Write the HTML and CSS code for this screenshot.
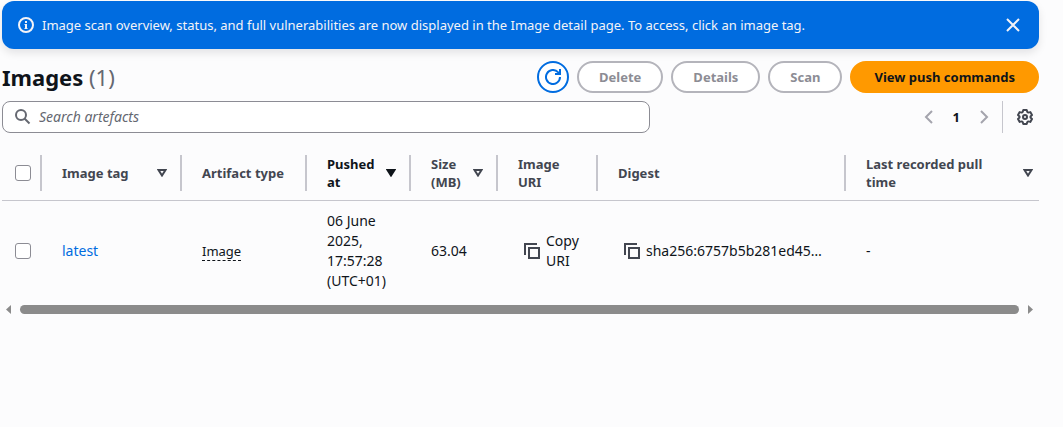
FILE: index.html
```html
<!DOCTYPE html>
<html lang="en">
<head>
<meta charset="utf-8">
<title>Images</title>
<link rel="stylesheet" href="styles.css">
</head>
<body>
<main class="page">
  <div class="banner" role="status">
    <svg class="icon" viewBox="0 0 16 16" aria-hidden="true"><circle cx="8" cy="8" r="7"/><path d="M8 7v5M8 4v2"/><path stroke-width="1" d="M6.500 7.500H8M6.500 11.500h3"/></svg>
    <p class="banner-text">Image scan overview, status, and full vulnerabilities are now displayed in the Image detail page. To access, click an image tag.</p>
    <button class="icon-button" type="button" aria-label="Dismiss"><svg class="icon" viewBox="0 0 16 16"><path d="m2 2 12 12M14 2 2 14"/></svg></button>
  </div>

  <header class="header">
    <h1 class="title">Images <span class="count">(1)</span></h1>
    <div class="actions">
      <button class="button refresh" type="button" aria-label="Refresh"><svg class="icon" viewBox="0 0 16 16"><path d="M15 8a7 7 0 1 1-2-4.900L15 5M10 5h5V0"/></svg></button>
      <button class="button" type="button" disabled>Delete</button>
      <button class="button" type="button" disabled>Details</button>
      <button class="button" type="button" disabled>Scan</button>
      <button class="button primary" type="button">View push commands</button>
    </div>
  </header>

  <div class="tools">
    <div class="search">
      <svg class="icon" viewBox="0 0 16 16" aria-hidden="true"><circle cx="6" cy="6" r="5"/><path d="m9.500 9.500 5 5"/></svg>
      <input class="search-input" type="search" placeholder="Search artefacts" aria-label="Search artefacts">
    </div>
    <nav class="pagination" aria-label="Pagination">
      <button class="icon-button" type="button" aria-label="Previous page" disabled><svg class="icon" viewBox="0 0 16 16"><path d="m11 2-6 6 6 6"/></svg></button>
      <button class="icon-button current" type="button" aria-current="page">1</button>
      <button class="icon-button" type="button" aria-label="Next page" disabled><svg class="icon" viewBox="0 0 16 16"><path d="m5 2 6 6-6 6"/></svg></button>
    </nav>
    <div class="preferences">
      <button class="icon-button" type="button" aria-label="Preferences"><svg class="icon" viewBox="0 0 16 16"><path stroke-linejoin="round" d="M6.300 1h3.400l.6 2 1 .6 2-.5L15 6l-1.500 1.400v1.200L15 10l-1.700 2.900-2-.5-1 .6-.6 2H6.300l-.6-2-1-.6-2 .5L1 10l1.500-1.400V7.400L1 6l1.700-2.900 2 .5 1-.6z"/><circle cx="8" cy="8" r="2"/></svg></button>
    </div>
  </div>

  <table class="table">
    <colgroup><col class="c-select"><col class="c-tag"><col class="c-type"><col class="c-pushed"><col class="c-size"><col class="c-uri"><col class="c-digest"><col></colgroup>
    <thead>
      <tr>
        <th class="select"><div class="head"><input class="check" type="checkbox" aria-label="Select all images"></div></th>
        <th><div class="head">Image tag<svg class="sort" viewBox="0 0 10 8"><path d="M1.500 1h7L5 6.500z"/></svg></div></th>
        <th><div class="head">Artifact type</div></th>
        <th class="sorted"><div class="head">Pushed at<svg class="sort" viewBox="0 0 10 8"><path d="M1.500 1h7L5 6.500z"/></svg></div></th>
        <th><div class="head">Size (MB)<svg class="sort" viewBox="0 0 10 8"><path d="M1.500 1h7L5 6.500z"/></svg></div></th>
        <th><div class="head">Image<br>URI</div></th>
        <th><div class="head">Digest</div></th>
        <th><div class="head">Last recorded pull time<svg class="sort" viewBox="0 0 10 8"><path d="M1.500 1h7L5 6.500z"/></svg></div></th>
      </tr>
    </thead>
    <tbody>
      <tr>
        <td class="select"><input class="check" type="checkbox" aria-label="Select latest"></td>
        <td><a class="link" href="#latest">latest</a></td>
        <td><span class="hint">Image</span></td>
        <td>06 June 2025, 17:57:28 (UTC+01)</td>
        <td>63.04</td>
        <td><div class="copy"><button class="icon-button" type="button" aria-label="Copy URI"><svg class="icon" viewBox="0 0 16 16"><path d="M13 1H1v11M5 5h10v10H5z"/></svg></button><span>Copy URI</span></div></td>
        <td><div class="copy"><button class="icon-button" type="button" aria-label="Copy digest"><svg class="icon" viewBox="0 0 16 16"><path d="M13 1H1v11M5 5h10v10H5z"/></svg></button><span class="digest">sha256:6757b5b281ed45…</span></div></td>
        <td>-</td>
      </tr>
    </tbody>
  </table>

  <div class="scrollbar" aria-hidden="true">
    <svg class="arrow" viewBox="0 0 5 9"><path d="M5 0v9L0 4.500z"/></svg>
    <div class="thumb"></div>
    <svg class="arrow" viewBox="0 0 5 9"><path d="M0 0v9l5-4.500z"/></svg>
  </div>
</main>
</body>
</html>
```
FILE: styles.css
```css
* { box-sizing: border-box; }
body {
  margin: 0;
  background: #fcfcfd;
  color: #0f141a;
  font: 14px/20px "Noto Sans", "Open Sans", sans-serif;
}
button, input { font: inherit; color: inherit; }
.page { padding: 1px 24px 0 2px; }
.icon {
  display: block;
  flex: none;
  width: 16px;
  height: 16px;
  fill: none;
  stroke: currentColor;
  stroke-width: 2;
}
.icon-button {
  display: block;
  padding: 0;
  border: 0;
  background: none;
}

.banner {
  display: flex;
  align-items: center;
  gap: 8px;
  min-height: 48px;
  padding: 8px 18px 8px 16px;
  border-radius: 12px;
  background: #006ce0;
  color: #f3f3f7;
  font-size: 13px;
  box-shadow: 0 4px 8px rgba(0, 7, 22, 0.1);
}
.banner-text { flex: 1; margin: 0; }

.header {
  display: flex;
  align-items: center;
  justify-content: space-between;
  margin-top: 12px;
}
.title { margin: 0; font-size: 22px; line-height: 32px; }
.count { color: #656871; font-weight: 400; }
.actions { display: flex; gap: 8px; }
.button {
  height: 32px;
  padding: 0 20px;
  border: 2px solid #b4b4bb;
  border-radius: 16px;
  background: #fff;
  color: #8c8c94;
  font-size: 13px;
  font-weight: 700;
}
.button.refresh {
  width: 32px;
  padding: 0 6px;
  border-color: #006ce0;
  color: #006ce0;
}
.button.primary {
  padding: 0 22px;
  border-color: #ff9900;
  background: #ff9900;
  color: #0f141a;
}

.tools { display: flex; align-items: center; margin-top: 8px; }
.search {
  display: flex;
  align-items: center;
  gap: 8px;
  width: 648px;
  height: 32px;
  padding: 0 12px;
  border: 1px solid #8c8c94;
  border-radius: 8px;
  background: #fff;
  color: #656871;
}
.search-input {
  flex: 1;
  min-width: 0;
  padding: 0;
  border: 0;
  outline: 0;
  background: none;
}
.search-input::placeholder { color: #656871; font-style: italic; opacity: 1; }
.pagination {
  display: flex;
  align-items: center;
  gap: 16px;
  margin-left: auto;
  color: #a4a4ad;
}
.current { color: #0f141a; font-size: 13px; font-weight: 700; }
.preferences {
  display: flex;
  align-items: center;
  height: 32px;
  margin-left: 10px;
  padding: 0 6px 0 14px;
  border-left: 1px solid #c6c6cd;
  color: #424650;
}

.table {
  width: 100%;
  margin-top: 12px;
  border-collapse: separate;
  border-spacing: 0;
  table-layout: fixed;
}
.c-select { width: 40px; }
.c-tag { width: 140px; }
.c-type { width: 125px; }
.c-pushed { width: 104px; }
.c-size { width: 87px; }
.c-uri { width: 100px; }
.c-digest { width: 248px; }
.table th {
  padding: 10px 0 9px;
  border-bottom: 1px solid #c6c6cd;
  color: #424650;
  font-size: 13px;
  line-height: 18px;
  text-align: left;
}
.head {
  display: flex;
  align-items: center;
  justify-content: space-between;
  gap: 8px;
  min-height: 36px;
  padding: 0 13px 0 20px;
  border-right: 2px solid #c6c6cd;
}
.table th:last-child .head { padding-right: 6px; border-right: 0; }
.select .head { padding: 0 0 0 13px; }
.table .sorted { color: #0f141a; }
.sort {
  flex: none;
  width: 10px;
  height: 8px;
  fill: none;
  stroke: currentColor;
  stroke-width: 2;
}
.sorted .sort { fill: currentColor; }
.table td { padding: 10px 20px; }
.table td.select { padding: 0 0 0 13px; }
.table td:nth-child(4) { padding-right: 10px; }
.table td:nth-child(6), .table td:nth-child(7) { padding-right: 8px; }
.check {
  display: block;
  appearance: none;
  width: 16px;
  height: 16px;
  margin: 0;
  border: 1px solid #8c8c94;
  border-radius: 3px;
  background: #fff;
}
.check:checked { background: #006ce0; }
.link { color: #006ce0; text-decoration: none; }
.hint { border-bottom: 1px dashed currentColor; font-size: 13px; }
.copy { display: flex; align-items: center; gap: 6px; padding-left: 6px; }
.copy .icon { color: #424650; }
.digest { white-space: nowrap; }

.scrollbar {
  display: flex;
  align-items: center;
  gap: 9px;
  margin-top: 4px;
  padding: 0 6px 0 4px;
}
.arrow { width: 5px; height: 9px; fill: #8b8b8b; }
.thumb { flex: 1; height: 9px; border-radius: 5px; background: #8b8b8b; }
```
